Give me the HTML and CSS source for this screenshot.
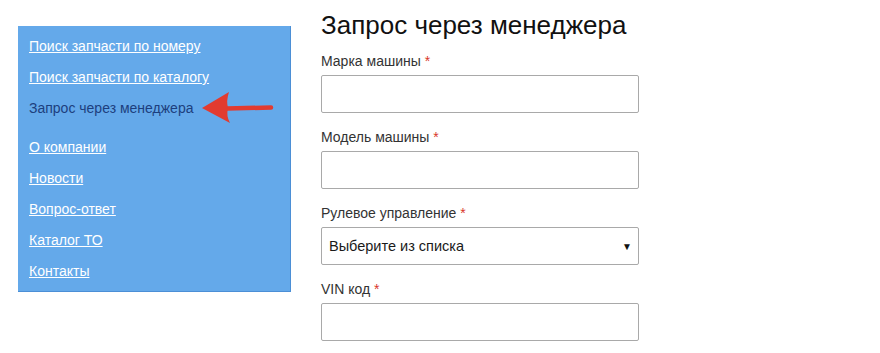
FILE: index.html
```html
<!DOCTYPE html>
<html lang="ru">
<head>
<meta charset="utf-8">
<title>Запрос через менеджера</title>
<link rel="stylesheet" href="styles.css">
</head>
<body>
<div class="page">
  <nav class="sidebar">
    <ul class="menu">
      <li><a href="#">Поиск запчасти по номеру</a></li>
      <li><a href="#">Поиск запчасти по каталогу</a></li>
      <li class="active"><span>Запрос через менеджера</span></li>
      <li><a href="#">О компании</a></li>
      <li><a href="#">Новости</a></li>
      <li><a href="#">Вопрос-ответ</a></li>
      <li><a href="#">Каталог ТО</a></li>
      <li><a href="#">Контакты</a></li>
    </ul>
    <svg class="pointer" width="74" height="34" viewBox="0 0 74 34">
      <line x1="26" y1="17.5" x2="70" y2="16.5" stroke="#e23b30" stroke-width="4.5" stroke-linecap="round"/>
      <path d="M1 17 L28 1 Q25 10 27 17 Q25 25 29 32 Z" fill="#e23b30"/>
    </svg>
  </nav>
  <main class="content">
    <h1 class="title">Запрос через менеджера</h1>
    <form class="form">
      <div class="field">
        <label class="label">Марка машины <span class="req">*</span></label>
        <input class="input" type="text">
      </div>
      <div class="field">
        <label class="label">Модель машины <span class="req">*</span></label>
        <input class="input" type="text">
      </div>
      <div class="field">
        <label class="label">Рулевое управление <span class="req">*</span></label>
        <div class="select">
          <span class="select-text">Выберите из списка</span>
          <span class="select-arrow">▼</span>
        </div>
      </div>
      <div class="field">
        <label class="label">VIN код <span class="req">*</span></label>
        <input class="input" type="text">
      </div>
    </form>
  </main>
</div>
</body>
</html>
```

FILE: styles.css
```css
html, body {
  margin: 0;
  padding: 0;
  background: #ffffff;
}
body {
  font-family: "Liberation Sans", Arial, sans-serif;
  color: #222;
}
.page {
  display: flex;
  align-items: flex-start;
  gap: 30px;
  padding-left: 18px;
}
.sidebar {
  position: relative;
  margin-top: 26px;
  width: 273px;
  background: #64a9ea;
  border-right: 1px solid #4b8fd6;
  border-bottom: 1px solid #4b8fd6;
  padding: 5px 0 4px 11px;
  box-sizing: border-box;
}
.menu {
  list-style: none;
  margin: 0;
  padding: 0;
}
.menu li {
  font-size: 14px;
  line-height: 31px;
}
.menu a {
  color: #ffffff;
  text-decoration: underline;
}
.menu .active {
  color: #1d3f7e;
  margin-bottom: 8px;
}
.pointer {
  position: absolute;
  left: 183px;
  top: 65px;
}
.content {
  padding-top: 11px;
  width: 318px;
}
.title {
  margin: 0;
  font-size: 26px;
  line-height: 28px;
  font-weight: normal;
  color: #111;
  white-space: nowrap;
}
.form {
  margin-top: 12px;
}
.field {
  display: flex;
  flex-direction: column;
  margin-bottom: 14px;
}
.label {
  font-size: 14px;
  line-height: 20px;
  color: #333;
  margin-bottom: 4px;
}
.req {
  color: #d9362b;
}
.input {
  box-sizing: border-box;
  width: 318px;
  height: 38px;
  margin: 0;
  border: 1px solid #a9a9a9;
  border-radius: 2px;
  background: #fff;
  padding: 0 8px;
}
.select {
  position: relative;
  box-sizing: border-box;
  width: 318px;
  height: 38px;
  border: 1px solid #a9a9a9;
  border-radius: 2px;
  background: #fff;
  display: flex;
  align-items: center;
  justify-content: space-between;
  padding: 0 6px 0 7px;
}
.select-text {
  font-size: 14.5px;
  color: #1a1a1a;
}
.select-arrow {
  font-size: 10px;
  color: #111;
}
```
